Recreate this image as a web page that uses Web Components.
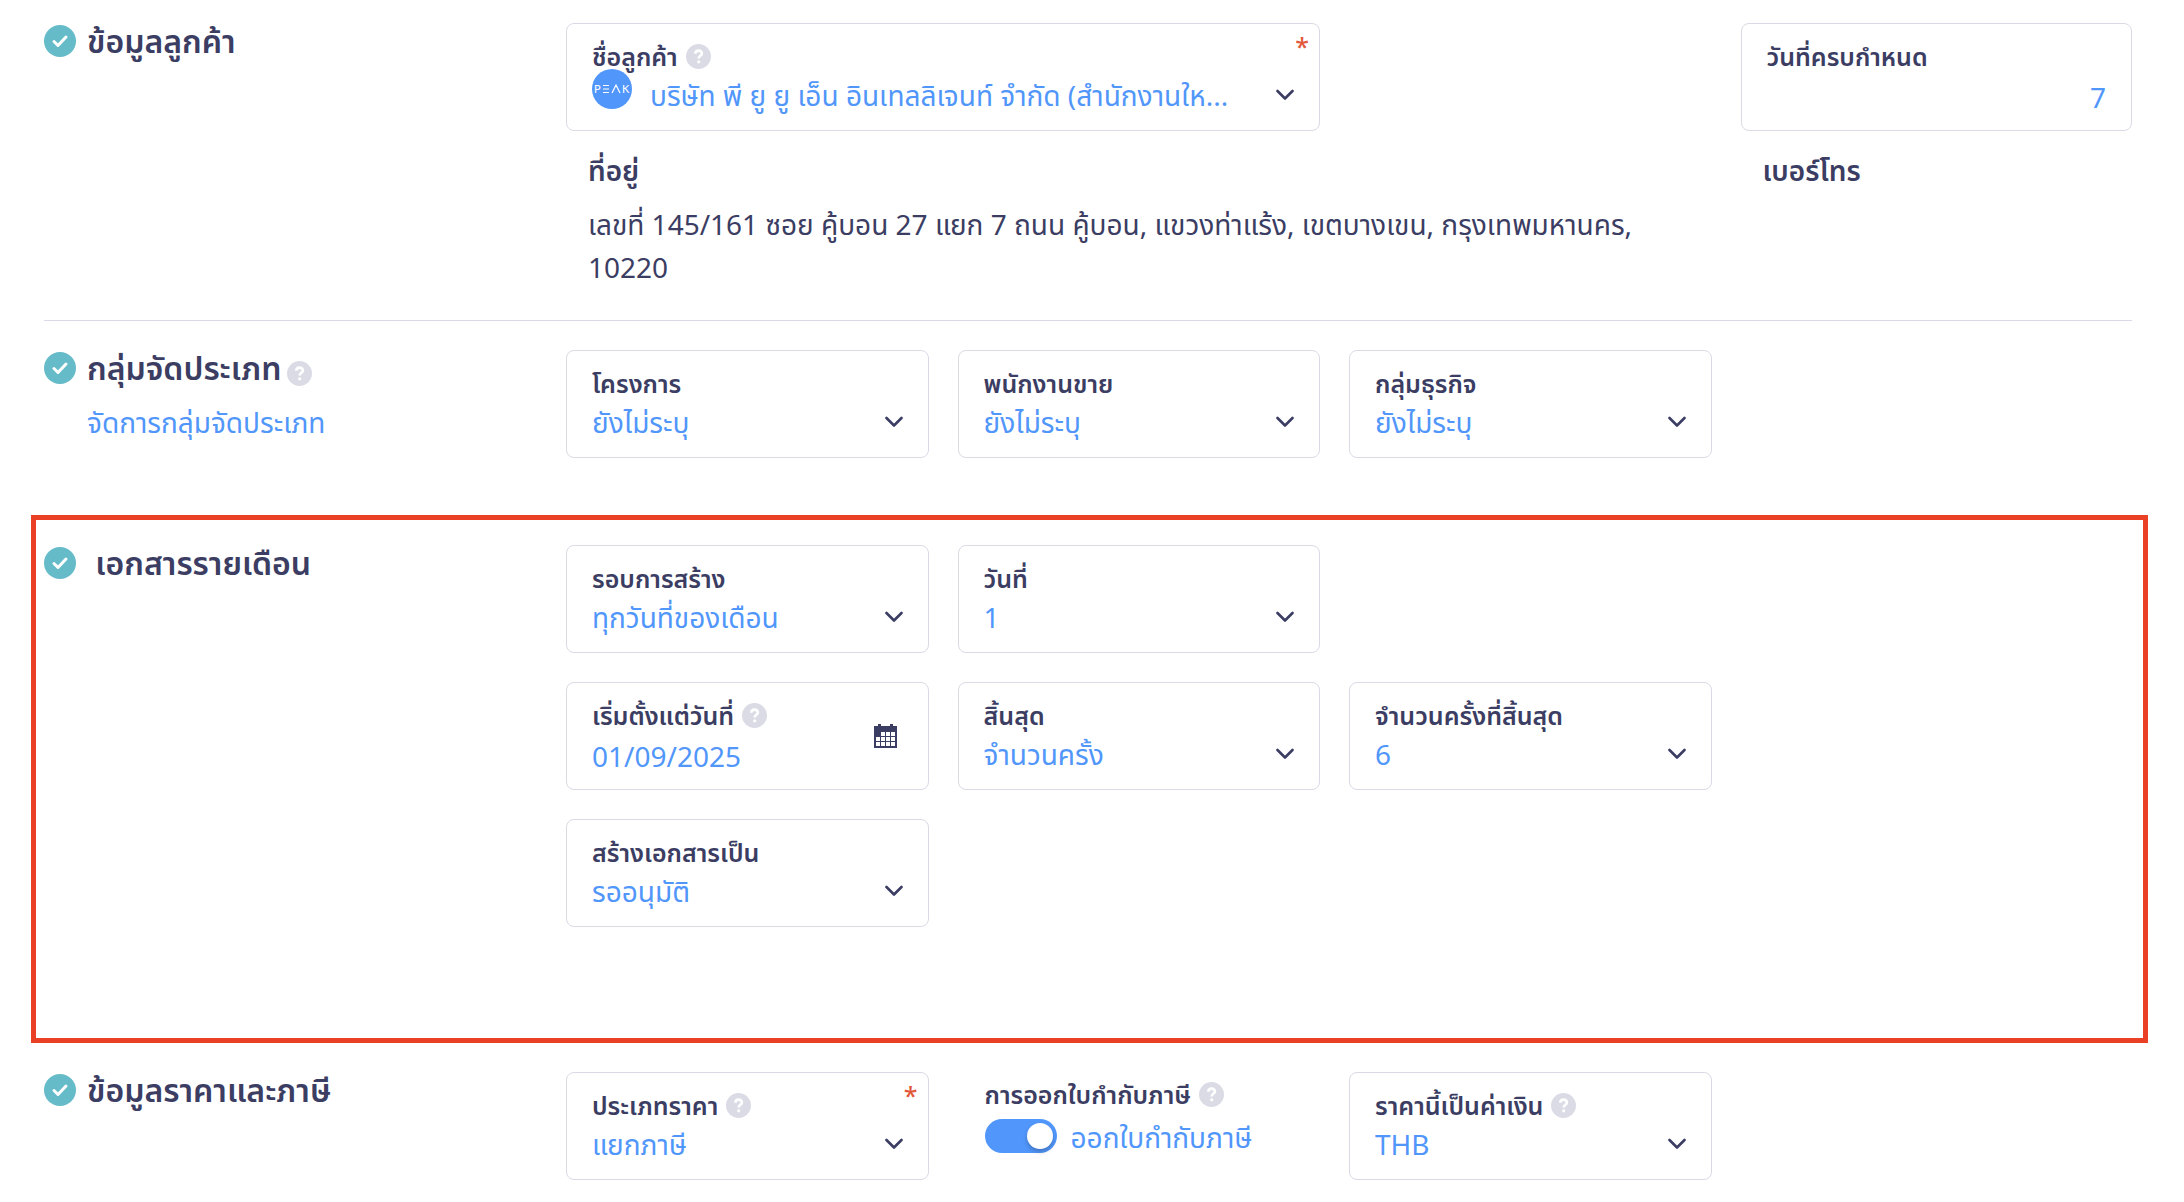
<!DOCTYPE html>
<html lang="th">
<head>
<meta charset="utf-8">
<meta name="viewport" content="width=device-width, initial-scale=1">
<title>เอกสารรายเดือน</title>
<style>
	:root {
		--ink: #3b3d63;
		--blue: #5196fa;
		--line: #dadae6;
		--muted: #dbdbe6;
		--teal: #65bbc8;
		--red: #e2583a;
		--mark: #ea4126;
		--label-size: 25px;
		--value-size: 28px;
		--title-size: 32px;
	}
	body {
		margin: 0;
		background: #fff;
		color: var(--ink);
		font-family: "Noto Sans", "Noto Sans Thai", "Open Sans", sans-serif;
		font-size: var(--value-size);
		font-weight: 400;
	}
</style>
</head>
<body>

<document-form>
	<form-section class="ruled">
		<span slot="title">ข้อมูลลูกค้า</span>
		<select-field class="span-2" required help logo value="บริษัท พี ยู ยู เอ็น อินเทลลิเจนท์ จำกัด (สำนักงานให...">ชื่อลูกค้า</select-field>
		<number-field class="last" value="7">วันที่ครบกำหนด</number-field>
		<info-block class="span-3">
			<span slot="title">ที่อยู่</span>
			เลขที่ 145/161 ซอย คู้บอน 27 แยก 7 ถนน คู้บอน, แขวงท่าแร้ง, เขตบางเขน, กรุงเทพมหานคร, 10220
		</info-block>
		<info-block class="last">
			<span slot="title">เบอร์โทร</span>
		</info-block>
	</form-section>

	<form-section class="groups" help>
		<span slot="title">กลุ่มจัดประเภท</span>
		<a slot="link" href="#groups">จัดการกลุ่มจัดประเภท</a>
		<select-field value="ยังไม่ระบุ">โครงการ</select-field>
		<select-field value="ยังไม่ระบุ">พนักงานขาย</select-field>
		<select-field value="ยังไม่ระบุ">กลุ่มธุรกิจ</select-field>
	</form-section>

	<form-section class="marked">
		<span slot="title">&nbsp;เอกสารรายเดือน</span>
		<select-field value="ทุกวันที่ของเดือน">รอบการสร้าง</select-field>
		<select-field value="1">วันที่</select-field>
		<date-field class="row-start" help value="01/09/2025">เริ่มตั้งแต่วันที่</date-field>
		<select-field value="จำนวนครั้ง">สิ้นสุด</select-field>
		<select-field value="6">จำนวนครั้งที่สิ้นสุด</select-field>
		<select-field class="row-start" value="รออนุมัติ">สร้างเอกสารเป็น</select-field>
	</form-section>

	<form-section class="price">
		<span slot="title">ข้อมูลราคาและภาษี</span>
		<select-field required help value="แยกภาษี">ประเภทราคา</select-field>
		<toggle-field help value="ออกใบกำกับภาษี">การออกใบกำกับภาษี</toggle-field>
		<select-field help value="THB">ราคานี้เป็นค่าเงิน</select-field>
	</form-section>
</document-form>

<script>
"use strict"

// box, label row and control shared by every bordered field
const fieldStyle = `
	:host {
		display: block;
		min-width: 0;
	}
	.card {
		display: flex;
		position: relative;
		border: 1px solid var(--line);
		border-radius: 8px;
		padding: 14px 25px;
		background: #fff;
	}
	.body {
		flex: 1;
		min-width: 0;
	}
	.label {
		display: flex;
		align-items: center;
		gap: 8px;
		height: 36px;
		white-space: nowrap;
	}
	label {
		font-size: var(--label-size);
		font-weight: 600;
		line-height: 36px;
	}
	.control {
		display: grid;
		align-items: center;
	}
	select, input {
		grid-area: 1 / 1;
		box-sizing: border-box;
		width: 100%;
		min-width: 0;
		height: 42px;
		margin: 0;
		padding: 0;
		border: 0;
		outline: 0;
		appearance: none;
		background: none;
		color: var(--blue);
		font: inherit;
		line-height: 42px;
	}
	.required {
		position: absolute;
		top: 6px;
		right: 10px;
		color: var(--red);
		font-size: var(--label-size);
		font-weight: 500;
		line-height: 32px;
	}
`

class DocumentForm extends HTMLElement {

	connectedCallback() {
		this.attachShadow({ mode: "open" }).innerHTML = `
			<style>
				:host {
					display: block;
					padding: 23px 36px 22px 31px;
				}
			</style>
			<slot></slot>
		`
	}

}

class CheckBadge extends HTMLElement {

	connectedCallback() {
		this.attachShadow({ mode: "open" }).innerHTML = `
			<style>
				:host {
					display: block;
					width: 32px;
					height: 32px;
				}
				svg {
					display: block;
				}
			</style>
			<svg width="32" height="32" viewBox="0 0 32 32" aria-hidden="true">
				<circle cx="16" cy="16" r="16" fill="var(--teal)"/>
				<path d="M10 16.5l4 4 8-8.5" fill="none" stroke="#fff" stroke-width="3" stroke-linecap="round" stroke-linejoin="round"/>
			</svg>
		`
	}

}

class HelpTip extends HTMLElement {

	connectedCallback() {
		this.attachShadow({ mode: "open" }).innerHTML = `
			<style>
				:host {
					display: block;
				}
				button {
					display: block;
					width: 25px;
					height: 25px;
					margin: 0;
					padding: 0;
					border: 0;
					border-radius: 50%;
					background: var(--muted);
					cursor: pointer;
				}
				svg {
					display: block;
				}
			</style>
			<button type="button" aria-label="help">
				<svg width="25" height="25" viewBox="0 0 25 25">
					<path d="M9.3 9.8c0-4.2 6.6-4.1 6.6-.3 0 2.3-3.2 2.4-3.2 4.9" fill="none" stroke="#fff" stroke-width="2.6"/>
					<circle cx="12.7" cy="17.8" r="1.6" fill="#fff"/>
				</svg>
			</button>
		`
	}

}

class FormSection extends HTMLElement {

	connectedCallback() {
		this.attachShadow({ mode: "open" }).innerHTML = `
			<style>
				:host {
					display: grid;
					grid-template-columns: 1fr 3fr;
					padding: 0 16px 0 13px;
				}
				:host(.groups) {
					margin-top: 29px;
				}
				:host(.marked) {
					margin-top: 57px;
					border: 5px solid var(--mark);
					padding: 25px 11px 111px 8px;
				}
				:host(.price) {
					margin-top: 29px;
				}
				header {
					display: grid;
					grid-template-columns: 32px 1fr;
					column-gap: 11px;
					align-content: start;
				}
				check-badge {
					margin-top: 2px;
				}
				.title {
					display: flex;
					align-items: center;
					gap: 6px;
				}
				h2 {
					margin: 0;
					font-size: var(--title-size);
					font-weight: 600;
					line-height: 36px;
					white-space: nowrap;
				}
				help-tip {
					margin-top: 10px;
				}
				.link {
					grid-column: 2;
					margin-top: 16px;
					line-height: 40px;
				}
				::slotted(a) {
					color: var(--blue);
					text-decoration: none;
				}
				.fields {
					display: grid;
					grid-template-columns: repeat(4, 1fr);
					row-gap: 29px;
					align-content: start;
				}
				:host(.ruled) .fields {
					row-gap: 0;
				}
				.rule {
					grid-column: 1 / -1;
					width: 100%;
					margin: 31px 0 0;
					border: 0;
					border-top: 1px solid var(--line);
				}
				:host(:not(.ruled)) .rule {
					display: none;
				}
				slot:not([name])::slotted(*) {
					margin-right: 29px;
				}
				::slotted(.last) {
					grid-column: 4;
					margin-right: 0 !important;
				}
				::slotted(.span-2) {
					grid-column: span 2;
				}
				::slotted(.span-3) {
					grid-column: 1 / span 3;
				}
				::slotted(.row-start) {
					grid-column: 1;
				}
			</style>
			<header>
				<check-badge></check-badge>
				<div class="title">
					<h2><slot name="title"></slot></h2>
					${this.hasAttribute("help") ? "<help-tip></help-tip>" : ""}
				</div>
				<div class="link"><slot name="link"></slot></div>
			</header>
			<div class="fields"><slot></slot></div>
			<hr class="rule">
		`
	}

}

class InfoBlock extends HTMLElement {

	connectedCallback() {
		this.attachShadow({ mode: "open" }).innerHTML = `
			<style>
				:host {
					display: block;
					padding: 19px 22px 0;
				}
				h3 {
					margin: 0 0 13px;
					font-size: var(--value-size);
					font-weight: 600;
					line-height: 40px;
				}
				p {
					margin: 0;
					line-height: 43px;
				}
			</style>
			<h3><slot name="title"></slot></h3>
			<p><slot></slot></p>
		`
	}

}

// base class: subclasses only say what goes in the control
class FormField extends HTMLElement {

	connectedCallback() {
		this.value = this.getAttribute("value") || ""
		this.attachShadow({ mode: "open" }).innerHTML = this.getTemplate()
	}

	getLabel() {
		return `
			<div class="label">
				<label for="control"><slot></slot></label>
				${this.hasAttribute("help") ? "<help-tip></help-tip>" : ""}
			</div>
		`
	}

	getTemplate() {
		return `
			<style>${fieldStyle}${this.getStyle()}</style>
			<div class="card">
				<div class="body">
					${this.getLabel()}
					<div class="control">${this.getControl()}</div>
				</div>
				${this.getAside()}
				${this.hasAttribute("required") ? '<span class="required">*</span>' : ""}
			</div>
		`
	}

	getStyle() {
		return ""
	}

	getControl() {
		return ""
	}

	getAside() {
		return ""
	}

}

class SelectField extends FormField {

	getStyle() {
		return `
			select {
				padding-right: 30px;
				text-overflow: ellipsis;
				cursor: pointer;
			}
			.chevron {
				grid-area: 1 / 1;
				justify-self: end;
				pointer-events: none;
			}
			.logo {
				position: absolute;
				left: 25px;
				top: 45px;
			}
			:host([logo]) select {
				padding-left: 58px;
			}
			.logo text {
				font: 400 11px Lato, sans-serif;
				fill: #fff;
			}
		`
	}

	getControl() {
		return `
			<select id="control"><option>${this.value}</option></select>
			<svg class="chevron" width="18" height="12" viewBox="0 0 18 12" aria-hidden="true">
				<path d="M1.5 2L9 9.5 16.5 2" fill="none" stroke="var(--ink)" stroke-width="2.6" stroke-linecap="round" stroke-linejoin="round"/>
			</svg>
		`
	}

	getAside() {
		if (!this.hasAttribute("logo")) return ""
		return `
			<svg class="logo" width="40" height="40" viewBox="0 0 40 40">
				<circle cx="20" cy="20" r="20" fill="var(--blue)"/>
				<text x="2" y="24">P</text>
				<path d="M11 16.5h6M11 20h6M11 23.5h6M20 24l4-8 4 8" fill="none" stroke="#fff" stroke-width="1.2"/>
				<text x="30" y="24">K</text>
			</svg>
		`
	}

}

class NumberField extends FormField {

	getStyle() {
		return `
			input {
				padding-top: 4px;
				text-align: right;
			}
		`
	}

	getControl() {
		return `<input id="control" type="text" inputmode="numeric" value="${this.value}">`
	}

}

class DateField extends FormField {

	getStyle() {
		return `
			input {
				padding-top: 4px;
			}
			.calendar {
				align-self: center;
				margin: 0 6px 0 0;
				padding: 0;
				border: 0;
				background: none;
				cursor: pointer;
			}
			.calendar svg {
				display: block;
			}
		`
	}

	getControl() {
		return `<input id="control" type="text" value="${this.value}">`
	}

	getAside() {
		let cells = ""
		for (let row = 0; row < 3; row++) {
			for (let col = 0; col < 4; col++) {
				if (row == 0 && col == 0) continue
				cells += `<rect x="${2 + col * 5}" y="${8 + row * 5}" width="4" height="4"/>`
			}
		}
		return `
			<button class="calendar" type="button" aria-label="calendar">
				<svg width="23" height="24" viewBox="0 0 23 24">
					<path d="M4 0h3v2H4zM16 0h3v2h-3zM0 2h23v22H0z" fill="var(--ink)"/>
					<g fill="#fff">${cells}</g>
				</svg>
			</button>
		`
	}

}

class ToggleField extends FormField {

	getTemplate() {
		return `
			<style>
				${fieldStyle}
				:host {
					padding: 4px 0 0 27px;
				}
				.switch {
					display: flex;
					align-items: center;
					gap: 14px;
					height: 48px;
					color: var(--blue);
				}
				input {
					position: relative;
					flex: none;
					width: 72px;
					height: 34px;
					border-radius: 17px;
					background: var(--blue);
					cursor: pointer;
				}
				input::after {
					content: "";
					position: absolute;
					top: 4px;
					right: 4px;
					width: 26px;
					height: 26px;
					border-radius: 50%;
					background: #fff;
					box-shadow: 0 3px 4px rgba(0,0,0,0.2);
				}
				.state {
					padding-top: 6px;
					white-space: nowrap;
				}
			</style>
			${this.getLabel()}
			<div class="switch">
				<input id="control" type="checkbox" role="switch" checked>
				<span class="state">${this.value}</span>
			</div>
		`
	}

}

window.customElements.define("help-tip", HelpTip)
window.customElements.define("check-badge", CheckBadge)
window.customElements.define("info-block", InfoBlock)
window.customElements.define("select-field", SelectField)
window.customElements.define("number-field", NumberField)
window.customElements.define("date-field", DateField)
window.customElements.define("toggle-field", ToggleField)
window.customElements.define("form-section", FormSection)
window.customElements.define("document-form", DocumentForm)
</script>
</body>
</html>
